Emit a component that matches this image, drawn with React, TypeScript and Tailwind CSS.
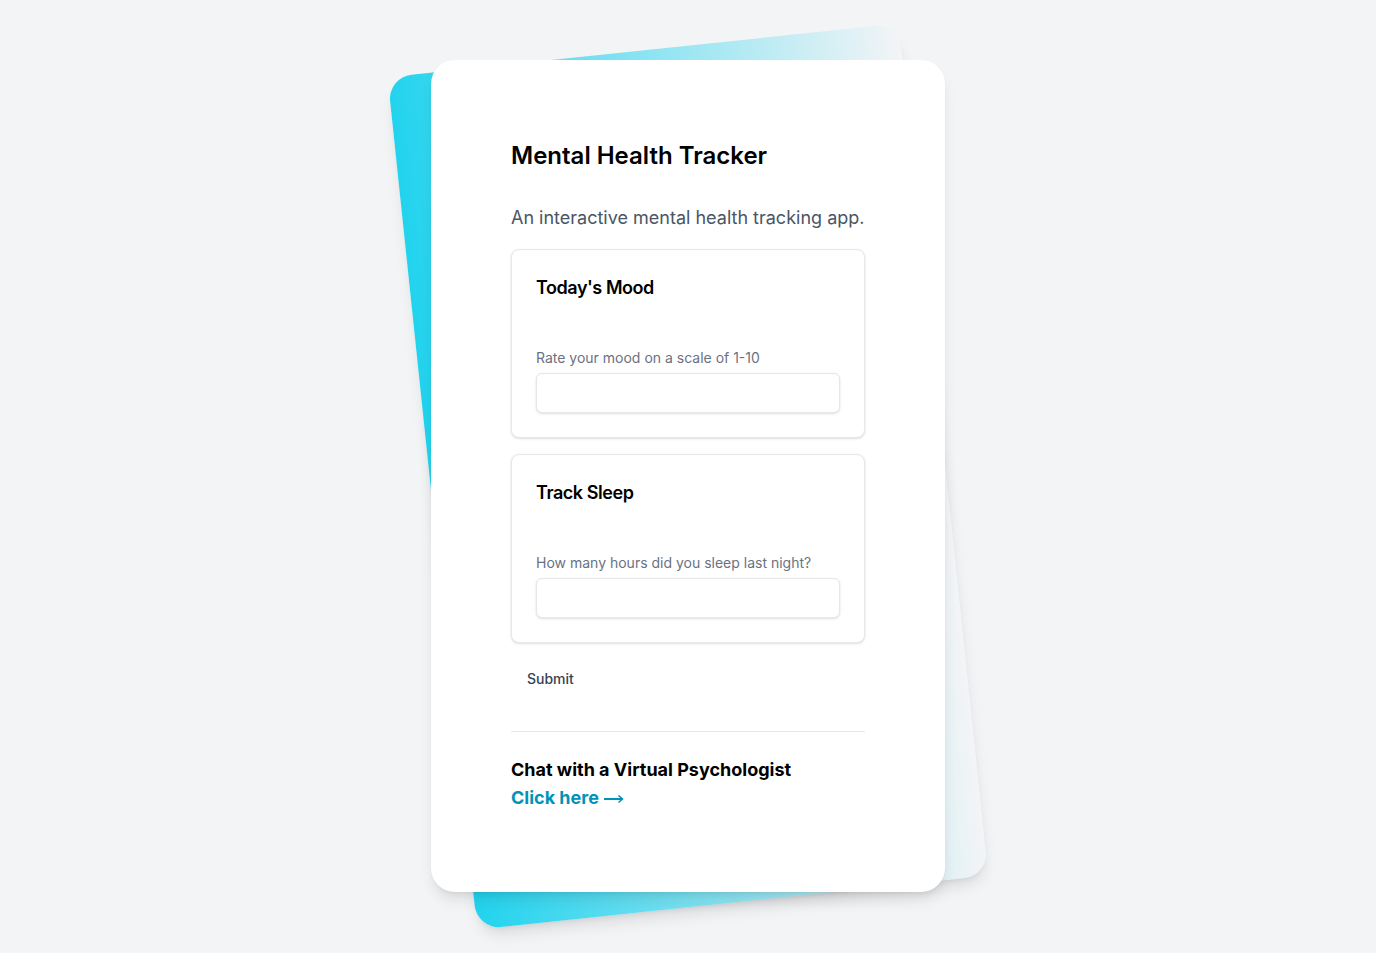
import React from 'react';

const TrackerCard = ({ title, label }: { title: string; label: string }) => (
  <div className="rounded-lg border border-gray-200 bg-white p-6 shadow-sm">
    <h3 className="text-lg leading-7 font-semibold tracking-tight text-black">{title}</h3>
    <label className="mt-[49px] block text-sm leading-none text-gray-500">{label}</label>
    <input
      type="text"
      className="mt-2 block h-10 w-full rounded-md border border-gray-200 bg-white px-3 shadow-sm outline-none"
    />
  </div>
);

export default function App() {
  return (
    <div
      className="flex min-h-screen justify-center bg-gray-100 py-[48px]"
      style={{ fontFamily: 'Inter, "Noto Sans", sans-serif' }}
    >
      <div className="relative w-[514px] py-3">
        {/* rotated backdrop */}
        <div className="absolute inset-0 -rotate-6 rounded-3xl bg-[linear-gradient(to_right,#22d3ee,rgba(34,211,238,0))] shadow-lg" />

        {/* main card */}
        <div className="relative rounded-3xl bg-white p-20 shadow-lg">
          <h1 className="text-2xl leading-8 font-semibold text-black">Mental Health Tracker</h1>

          <div className="divide-y divide-gray-200">
            <div className="pt-8 pb-8">
              <p className="text-lg leading-7 text-gray-600">An interactive mental health tracking app.</p>
              <div className="mt-[17px] space-y-4">
                <TrackerCard title="Today's Mood" label="Rate your mood on a scale of 1-10" />
                <TrackerCard title="Track Sleep" label="How many hours did you sleep last night?" />
                <button className="flex h-10 items-center rounded-md px-4 text-sm font-medium text-gray-700">
                  Submit
                </button>
              </div>
            </div>
            <div className="pt-6 text-lg leading-7 font-bold">
              <p className="text-black">Chat with a Virtual Psychologist</p>
              <p>
                <a href="#" className="inline-flex items-center gap-[5px] text-cyan-600">
                  Click here
                  <svg width="20" height="10" viewBox="0 0 20 10" fill="none" stroke="currentColor" strokeWidth="2" className="mt-[2px]">
                    <path d="M0 5h18" />
                    <path d="M14.5 1.5 18.5 5l-4 3.5" strokeWidth="1.6" />
                  </svg>
                </a>
              </p>
            </div>
          </div>
        </div>
      </div>
    </div>
  );
}
